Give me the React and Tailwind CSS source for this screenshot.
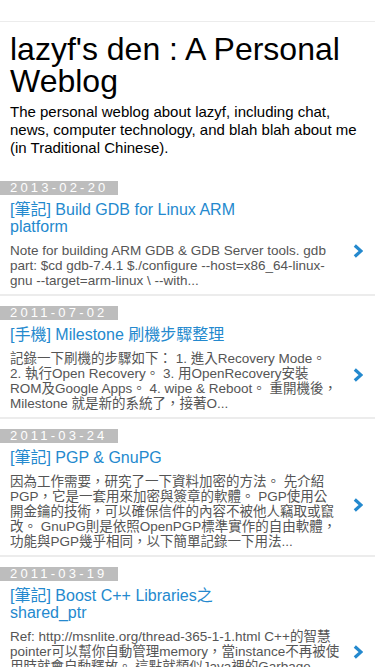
import React from 'react';

const posts = [
  {
    date: '2013-02-20',
    title: '[筆記] Build GDB for Linux ARM platform',
    summary:
      'Note for building ARM GDB & GDB Server tools. gdb part: $cd gdb-7.4.1 $./configure --host=x86_64-linux-gnu --target=arm-linux \\ --with...',
  },
  {
    date: '2011-07-02',
    title: '[手機] Milestone 刷機步驟整理',
    summary:
      '記錄一下刷機的步驟如下： 1. 進入Recovery Mode。 2. 執行Open Recovery。 3. 用OpenRecovery安裝ROM及Google Apps。 4. wipe & Reboot。 重開機後，Milestone 就是新的系統了，接著O...',
  },
  {
    date: '2011-03-24',
    title: '[筆記] PGP & GnuPG',
    summary:
      '因為工作需要，研究了一下資料加密的方法。 先介紹PGP，它是一套用來加密與簽章的軟體。 PGP使用公開金鑰的技術，可以確保信件的內容不被他人竊取或竄改。 GnuPG則是依照OpenPGP標準實作的自由軟體，功能與PGP幾乎相同，以下簡單記錄一下用法...',
  },
  {
    date: '2011-03-19',
    title: '[筆記] Boost C++ Libraries之shared_ptr',
    summary:
      'Ref: http://msnlite.org/thread-365-1-1.html C++的智慧 pointer可以幫你自動管理memory，當instance不再被使用時就會自動釋放。 這點就類似Java裡的Garbage Collector，可以省去很多手動delete的麻煩，也比較不會發生memory leak的問題...',
  },
  {
    date: '2011-02-11',
    title: '[心得] Android 開發環境設定',
    summary:
      '記錄一下在Ubuntu上安裝Android SDK與Eclipse的過程，以及設定ADT plugin時遇到的一些問題...',
  },
];

const Chevron = () => (
  <svg width="10" height="14" viewBox="0 0 10 14" className="shrink-0 mr-[12px] mt-[18px]">
    <polyline points="1.8,1.5 8,7 1.8,12.5" fill="none" stroke="#2489ce" strokeWidth="3.2" />
  </svg>
);

export default function App() {
  return (
    <div
      className="bg-white min-h-screen text-black"
      style={{ fontFamily: '"Liberation Sans", "Noto Sans CJK TC", sans-serif' }}
    >
      {/* header */}
      <div className="h-[22px] border-b border-[#ececec]" />

      <div className="px-[10px]">
        <h1 className="mt-[11px] text-[32px] leading-[32px] font-normal">lazyf's den : A Personal Weblog</h1>
        <p className="mt-[6px] mb-[14px] text-[15px] leading-[18px]">
          The personal weblog about lazyf, including chat, news, computer technology, and blah blah about me (in
          Traditional Chinese).
        </p>
      </div>

      {/* 文章列表 */}
      <ul>
        {posts.map((post) => (
          <li key={post.date} className="pt-[10px] pb-[6px] border-b-2 border-[#ececec]">
            <div className="w-[118px] h-[14px] bg-[#bdbdbd] pl-[10px] text-white text-[13px] leading-[14px] tracking-[3.2px]">
              {post.date}
            </div>
            <div className="flex items-center">
              <div className="flex-1 min-w-0 pl-[10px] pr-[13px]">
                <h3 className="mt-[6px] max-w-[265px] text-[16px] leading-[17px] text-[#2489ce] font-normal">
                  {post.title}
                </h3>
                <p className="mt-[8px] text-[13.5px] leading-[15px] text-[#555]">{post.summary}</p>
              </div>
              <Chevron />
            </div>
          </li>
        ))}
      </ul>
    </div>
  );
}
